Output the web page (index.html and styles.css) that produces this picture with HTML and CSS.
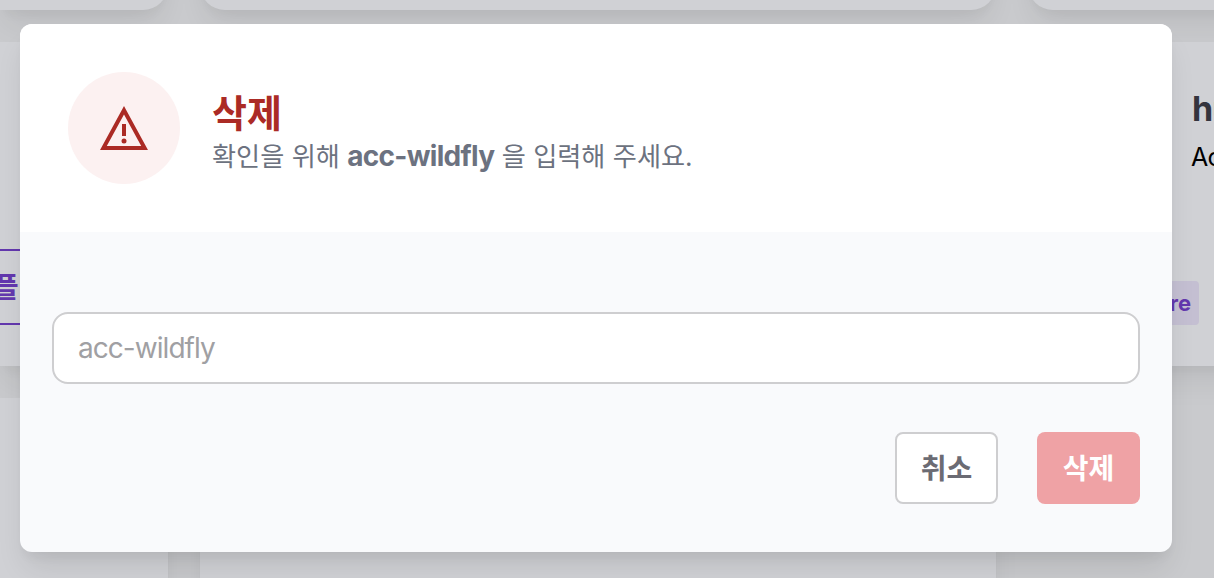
FILE: index.html
```html
<!DOCTYPE html>
<html lang="ko">
<head>
<meta charset="utf-8">
<title>삭제</title>
<link rel="stylesheet" href="styles.css">
</head>
<body>
<main class="board">
  <div class="card rounded first"></div><div class="card rounded"></div><div class="card rounded"></div>
  <div class="card left"><span class="outline-button">플</span></div>
  <div class="card"></div>
  <div class="card product"><h2 class="name">hu</h2><p class="vendor">Ac</p><span class="tag">re</span></div>
  <div class="card"></div><div class="card"></div><div class="card-space"></div>
</main>
<div class="overlay">
  <section class="dialog" role="dialog">
    <header class="head">
      <div class="badge">
        <svg class="warning" viewBox="0 0 48 44"><path d="M24 4.2 44.6 42H3.4Z" fill="none" stroke="currentColor" stroke-width="4"/><path d="M22 18h4v12h-4z" fill="currentColor"/><circle cx="24" cy="35" r="2.5" fill="currentColor"/></svg>
      </div>
      <div class="copy">
        <h1 class="title">삭제</h1>
        <p class="message"><span>확인을 위해</span> <b class="target">acc-wildfly</b> <span>을 입력해 주세요.</span></p>
      </div>
    </header>
    <form class="form">
      <input class="field" placeholder="acc-wildfly">
      <div class="actions">
        <button class="button cancel" type="button">취소</button>
        <button class="button delete" type="button" disabled>삭제</button>
      </div>
    </form>
  </section>
</div>
</body>
</html>
```
FILE: styles.css
```css
* { box-sizing: border-box; }
body {
  margin: 0;
  height: 578px;
  overflow: hidden;
  background: #c9cacd;
  font-family: Inter, "Noto Sans CJK KR", sans-serif;
}
h1, h2, p { margin: 0; }
.board {
  display: grid;
  grid-template-columns: 168px 796px 280px;
  grid-template-rows: 10px 324px 220px;
  gap: 32px;
  height: 578px;
  overflow: hidden;
}
.card {
  background: #d0d1d5;
  box-shadow: 0 20px 30px -6px rgba(0, 0, 0, .07), 0 8px 12px -4px rgba(0, 0, 0, .04);
}
.rounded { height: 80px; margin-top: -70px; border-radius: 25px; }
.first { border-radius: 0 25px 25px 0; }
.left { padding-top: 207px; overflow: hidden; }
.outline-button {
  display: flex;
  align-items: center;
  width: 100px;
  height: 76px;
  margin-left: -8px;
  padding-bottom: 4px;
  border: solid #6338ae;
  border-width: 2px 0;
  color: #6338ae;
  font-size: 29px;
  font-weight: 700;
}
.product { padding: 45px 0 0 164px; white-space: nowrap; }
.name { font-size: 34px; line-height: 44px; letter-spacing: -1px; color: #34343d; }
.vendor { margin: 11px 0 0 -1px; font-size: 25px; line-height: 30px; letter-spacing: -.8px; color: #000; }
.tag {
  display: block;
  width: 53px;
  height: 44px;
  margin: 109px 0 0 -46px;
  padding-right: 8px;
  border-radius: 4px;
  background: #c4bfd2;
  color: #6338ae;
  font-size: 22px;
  font-weight: 700;
  line-height: 44px;
  text-align: right;
}
.overlay { position: absolute; inset: 0; padding: 24px 42px 26px 20px; overflow: hidden; }
.dialog {
  height: 528px;
  border-radius: 12px;
  background: #f9fafc;
  box-shadow: 0 20px 30px -6px rgba(0, 0, 0, .1), 0 8px 12px -4px rgba(0, 0, 0, .05);
}
.head {
  display: flex;
  gap: 32px;
  height: 208px;
  padding: 48px;
  border-radius: 12px 12px 0 0;
  background: #fff;
}
.badge {
  display: grid;
  place-items: center;
  width: 112px;
  height: 112px;
  border-radius: 50%;
  background: #fcf1f1;
  color: #ab2b25;
}
.warning { width: 48px; height: 44px; }
.copy { padding-top: 17px; }
.title { font-size: 38px; line-height: 48px; color: #ab2b25; }
.message { margin-top: -1px; font-size: 26.2px; line-height: 40px; color: #6c7280; white-space: nowrap; }
.target { font-size: 28px; letter-spacing: -.7px; }
.form { display: flex; flex-direction: column; padding: 80px 32px 48px; }
.field {
  width: 100%;
  height: 72px;
  padding: 0 24px;
  border: 2px solid #ceced0;
  border-radius: 16px;
  background: #fff;
  font: 28px Inter, "Noto Sans CJK KR", sans-serif;
  letter-spacing: -.95px;
}
.field::placeholder { color: #a0a0a3; }
.actions { display: flex; justify-content: flex-end; gap: 39px; margin-top: 48px; }
.button {
  width: 103px;
  height: 72px;
  padding: 0 0 2px;
  border: 0;
  border-radius: 8px;
  font: 700 28px Inter, "Noto Sans CJK KR", sans-serif;
}
.cancel { border: 2px solid #ceced0; background: #fff; color: #6b6b73; }
.delete { background: #efa2a5; color: #fff; }
```
